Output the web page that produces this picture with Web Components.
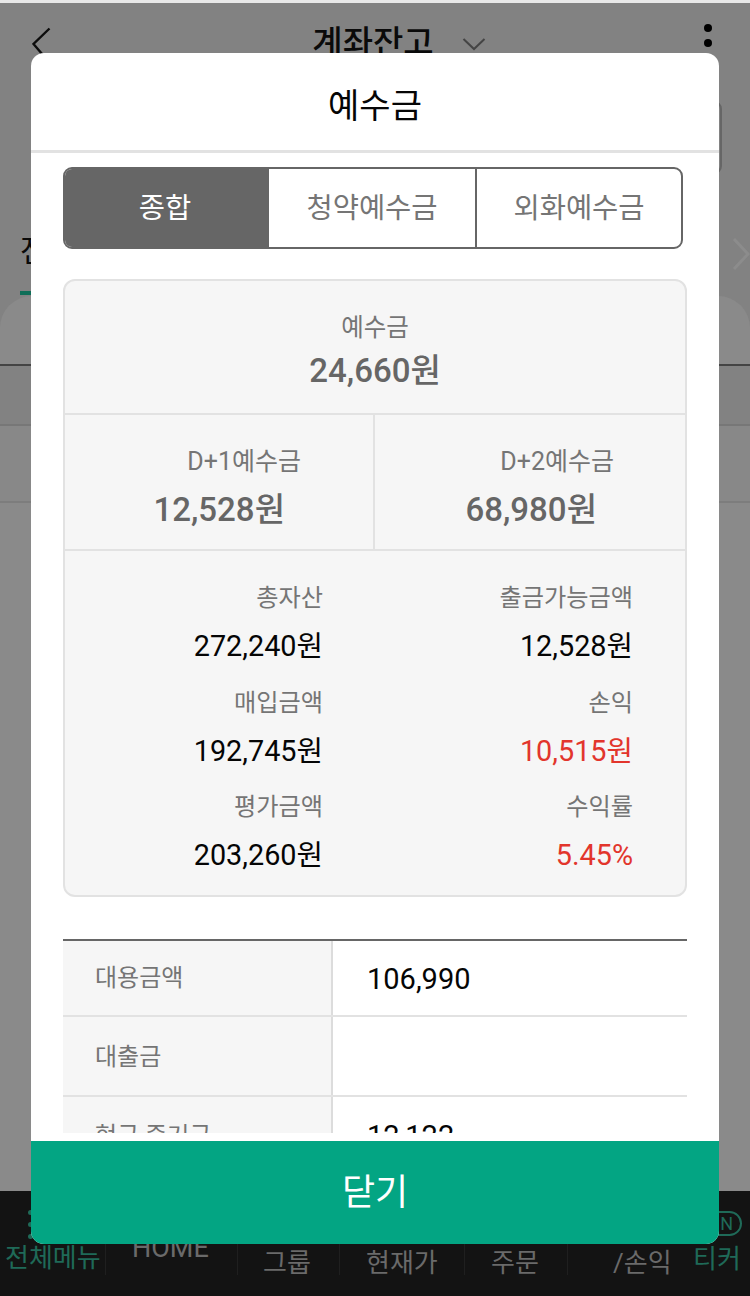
<!DOCTYPE html>
<html lang="ko"><head><meta charset="utf-8"><title>예수금</title>
<style>
html,body{margin:0;padding:0;background:#828282}
body{font-family:Roboto,"Noto Sans CJK KR",sans-serif;width:750px;height:1296px;overflow:hidden}
</style></head><body>
<x-app></x-app>
<script>
function def(name,html,init){customElements.define(name,class extends HTMLElement{
  constructor(){super();const r=this.attachShadow({mode:'open'});r.innerHTML=typeof html==='function'?html(this):html;}
  connectedCallback(){if(this._d)return;this._d=1;if(init)init(this)}
});}
const FONT='font-family:Roboto,"Noto Sans CJK KR",sans-serif;';

def('x-topbar',`<style>
:host{display:block;height:98px;position:relative;${FONT}}
.row{display:flex;align-items:flex-start;height:98px}
.back{margin:24px 0 0 32px;width:20px;height:32px;flex:none}
.mid{flex:1;display:flex;justify-content:center;align-items:flex-start;padding-left:42px;gap:28px}
h1{margin:20px 0 0;font-size:33px;line-height:40px;font-weight:500;color:#0a0a0a}
.chev{margin:34px 0 0;width:24px;height:14px;flex:none}
.dots{margin:21px 38px 0 0;width:8px;display:flex;flex-direction:column;gap:7px;flex:none}
.dots i{display:block;width:8px;height:8px;border-radius:50%;background:#000}
</style><div class="row">
<svg class="back" viewBox="0 0 20 32"><path d="M17.5 1.5 1.5 17l12 14" fill="none" stroke="#0c0c0c" stroke-width="2.4"/></svg>
<div class="mid"><h1>계좌잔고</h1><svg class="chev" viewBox="0 0 24 14"><path d="M1.5 2 12 12 22.5 2" fill="none" stroke="#444" stroke-width="2"/></svg></div>
<div class="dots"><i></i><i></i></div></div>`);

def('x-searchbox',`<style>
:host{display:block;height:76px;padding-left:40px;box-sizing:border-box}
.b{margin-right:28px;height:73px;border:2px solid #666;border-radius:8px;box-sizing:border-box}
</style><div class="b"></div>`);

def('x-subtabs',`<style>
:host{display:flex;height:119px;position:relative;justify-content:space-between;${FONT}}
.t{margin-left:20px;display:flex;flex-direction:column;width:80px}
.t span{font-size:30px;line-height:40px;margin-top:54px;color:#0a0a0a;font-weight:400}
.t i{display:block;height:4px;margin-top:20px;background:#0f6e58}
svg{width:18px;height:34px;margin:60px 0 0 0;flex:none}
</style><div class="t"><span>전</span><i></i></div>
<svg viewBox="0 0 18 34"><path d="M2 2l14 15L2 32" fill="none" stroke="#8c8c8c" stroke-width="3"/></svg>`);

def('x-backlist',`<style>
:host{display:flex;flex-direction:column;flex:1;min-height:0}
.head{height:68px;background:#8a8a8a;border-radius:32px 32px 0 0}
.rule{height:2px;background:#444}
.r1{height:58px;background:#828282;border-bottom:2px solid #777}
.r2{height:75px;background:#888;border-bottom:2px solid #7d7d7d}
.rest{flex:1;background:#8a8a8a}
</style><div class="head"></div><div class="rule"></div><div class="r1"></div><div class="r2"></div><div class="rest"></div>`);

def('x-nav-item',h=>`<style>
:host{display:block;box-sizing:border-box;height:100%;position:relative;${FONT}
 width:${h.getAttribute('w')}px;flex:none;padding-left:${h.getAttribute('pl')||0}px;padding-top:${h.getAttribute('pt')}px;
 font-size:${h.getAttribute('fs')||26}px;line-height:32px;white-space:nowrap;color:${h.hasAttribute('green')?'#1f6a58':'#6a6a6a'}}
.sep{position:absolute;right:0;top:26px;height:58px;width:1px;background:#1f1f1f}
</style><slot></slot>${h.hasAttribute('sep')?'<div class="sep"></div>':''}`);

def('x-ticker-badge',`<style>
:host{position:absolute;left:700px;top:20px;width:42px;height:25px;box-sizing:border-box;border:2px solid #1f6a58;border-radius:13px;
 color:#1f6a58;font:400 18px/21px Roboto,sans-serif;text-align:right;padding-right:7px}
</style>N`);

def('x-dots3',`<style>
:host{position:absolute;left:28px;top:19px;display:flex;flex-direction:column;gap:7px}
i{display:block;width:5px;height:5px;border-radius:50%;background:#1f6a58}
</style><i></i><i></i><i></i>`);

def('x-bottomnav',`<style>
:host{display:flex;height:105px;background:#131313;position:relative;flex:none}
</style><slot></slot>`);

def('x-seg',`<style>
:host{display:flex;height:82px;margin:14px 36px 0 32px;box-sizing:border-box;border:2px solid #666;border-radius:9px;overflow:hidden;${FONT}
 font-size:28.5px;color:#757575;background:#fff}
div{display:flex;align-items:center;justify-content:center;box-sizing:border-box;padding-bottom:6px}
.a{width:204px;background:#666;color:#fff;flex:none;padding-right:4px}
.b{width:208px;border-right:2px solid #666;flex:none}
.c{flex:1}
</style><div class="a">종합</div><div class="b">청약예수금</div><div class="c">외화예수금</div>`);

def('x-stat',h=>`<style>
:host{display:block;${FONT}text-align:${h.getAttribute('align')||'right'};box-sizing:border-box}
.l{font-size:24.2px;line-height:32px;color:#757575}
.v{font-size:28.8px;line-height:40px;color:${h.hasAttribute('red')?'#e2352c':'#050505'};margin-top:12px}
:host([big]) .l{font-size:25px}
:host([big]) .v{font-size:33px;font-weight:500;color:#666;margin-top:12px;margin-right:var(--vr,0)}
:host([big][top]) .v{margin-top:7px}
:host([big][top]) .l{font-size:24.5px}
</style><div class="l">${h.getAttribute('label')}</div><div class="v">${h.getAttribute('value')}</div>`);

def('x-summary',`<style>
:host{display:block;margin:30px 32px 0;box-sizing:border-box;height:618px;border:2px solid #e2e2e2;border-radius:12px;background:#f6f6f6;overflow:hidden}
.top{height:134px;box-sizing:border-box;padding-top:31px;border-bottom:2px solid #e2e2e2}
.two{display:grid;grid-template-columns:310px 1fr;height:136px;border-bottom:2px solid #e2e2e2;box-sizing:border-box}
.two>div{box-sizing:border-box;padding-top:31px}
.two>div:first-child{border-right:2px solid #e2e2e2}
.c1r{--vr:16px;width:236px}
.c2r{--vr:17px;width:239px}
.grid{display:grid;grid-template-columns:258px 310px;row-gap:20.5px;padding-top:31px}
</style>
<div class="top"><x-stat big top align="center" label="예수금" value="24,660원"></x-stat></div>
<div class="two"><div><x-stat big class="c1r" label="D+1예수금" value="12,528원"></x-stat></div><div><x-stat big class="c2r" label="D+2예수금" value="68,980원"></x-stat></div></div>
<div class="grid">
<x-stat label="총자산" value="272,240원"></x-stat><x-stat label="출금가능금액" value="12,528원"></x-stat>
<x-stat label="매입금액" value="192,745원"></x-stat><x-stat red label="손익" value="10,515원"></x-stat>
<x-stat label="평가금액" value="203,260원"></x-stat><x-stat red label="수익률" value="5.45%"></x-stat>
</div>`);

def('x-trow',h=>`<style>
:host{display:grid;grid-template-columns:270px 1fr;height:${h.getAttribute('h')||80}px;box-sizing:border-box;border-bottom:2px solid #e2e2e2;${FONT}}
.k{background:#f6f6f6;border-right:2px solid #dcdcdc;color:#757575;font-size:24px;line-height:32px;padding:${h.getAttribute('kt')||19}px 0 0 32px;box-sizing:border-box;white-space:nowrap}
.v{font-size:29px;line-height:40px;color:#050505;padding:${h.getAttribute('vt')||17}px 0 0 34px;box-sizing:border-box}
</style><div class="k">${h.getAttribute('k')}</div><div class="v">${h.getAttribute('v')||''}</div>`);

def('x-table',`<style>
:host{display:block;margin:42px 32px 0;border-top:2px solid #666}
</style><slot></slot>`);

def('x-modal',`<style>
:host{position:absolute;left:31px;top:53px;width:688px;height:1191px;background:#fff;border-radius:13px;display:flex;flex-direction:column;overflow:hidden;${FONT}}
.h{height:100px;flex:none;box-sizing:border-box;border-bottom:3px solid #e2e2e2;text-align:center;font-size:34px;line-height:40px;padding-top:33px;color:#050505;font-weight:400}
.body{height:980px;flex:none;overflow:hidden}
.btn{height:103px;flex:none;margin-top:8px;background:#03a583;color:#fff;font-size:36px;line-height:50px;text-align:center;padding-top:27px;box-sizing:border-box}
</style>
<div class="h">예수금</div>
<div class="body"><x-seg></x-seg><x-summary></x-summary>
<x-table><x-trow k="대용금액" v="106,990" h="76" kt="21" vt="18"></x-trow><x-trow k="대출금" h="80" kt="24"></x-trow><x-trow k="현금 증거금" v="12,122" h="80" kt="23" vt="19"></x-trow></x-table>
</div>
<div class="btn">닫기</div>`);

def('x-app',`<style>
:host{display:flex;flex-direction:column;width:750px;height:1296px;position:relative;background:#828282;overflow:hidden}
.strip{height:3px;background:#e8e8e8;flex:none}
</style>
<div class="strip"></div>
<x-topbar></x-topbar><x-searchbox></x-searchbox><x-subtabs></x-subtabs><x-backlist></x-backlist>
<x-bottomnav>
<x-dots3></x-dots3><x-ticker-badge></x-ticker-badge>
<x-nav-item w="106" pl="5" pt="51" green sep>전체메뉴</x-nav-item>
<x-nav-item w="132" pl="26" pt="41" fs="27" sep>HOME</x-nav-item>
<x-nav-item w="102" pl="25" pt="56" sep>그룹</x-nav-item>
<x-nav-item w="125" pl="26" pt="56" sep>현재가</x-nav-item>
<x-nav-item w="103" pl="26" pt="56" sep>주문</x-nav-item>
<x-nav-item w="125" pl="45" pt="56">/손익</x-nav-item>
<x-nav-item w="57" pl="0" pt="52" green>티커</x-nav-item>
</x-bottomnav>
<x-modal></x-modal>`);
</script>
</body></html>
